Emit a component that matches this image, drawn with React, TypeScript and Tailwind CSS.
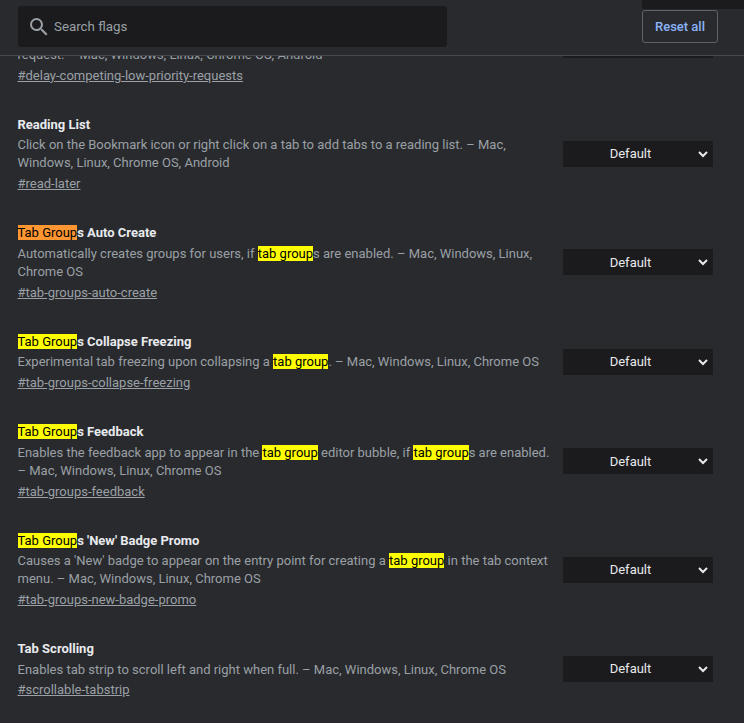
import type { ReactNode } from "react";

// Chrome's find-in-page highlight on top of the flags list
function Hit({ children, active }: { children: ReactNode; active?: boolean }) {
  return (
    <mark className={`font-normal text-black ${active ? "bg-[#ff9632]" : "bg-[#ffff00]"}`}>
      {children}
    </mark>
  );
}

function FlagSelect() {
  return (
    <div className="mb-[1px] flex h-[26px] w-[150px] shrink-0 items-center bg-[#1b1b1d] pr-[3px] text-[13px] text-[#e8eaed]">
      <span className="flex-1 pl-[2px] text-center">Default</span>
      <svg width="14" height="14" viewBox="0 0 14 14" fill="none" stroke="#e8eaed" strokeWidth="2">
        <path d="M3 5l4 4 4-4" />
      </svg>
    </div>
  );
}

function Flag({
  title,
  desc,
  link,
}: {
  title: ReactNode;
  desc: ReactNode;
  link: string;
}) {
  return (
    <div className="flex items-center justify-between pb-[31px]">
      <div className="w-[535px]">
        <div className="text-[13px] leading-[18px] font-bold text-[#e8eaed]">{title}</div>
        <p className="mt-[2.5px] text-[13px] leading-[18.2px] text-[#9aa0a6]">{desc}</p>
        <a className="mt-[2.6px] block text-[13px] leading-[18px] text-[#9aa0a6] underline">{link}</a>
      </div>
      <FlagSelect />
    </div>
  );
}

export default function App() {
  return (
    <div className="relative flex h-[723px] w-[744px] flex-col overflow-hidden bg-[#292a2d] font-['Roboto',sans-serif]">
      <header className="z-10 flex h-[56px] shrink-0 items-start justify-between border-b border-[#48494c] bg-[#292a2d] pr-[26px] pl-[18px]">
        <div className="mt-[6px] flex h-[41px] w-[429px] items-center gap-[3px] rounded-[3px] bg-[#1b1b1d] pl-[9px] text-[13.33px] text-[#9aa0a6]">
          <svg width="24" height="24" viewBox="0 0 24 24" fill="#9aa0a6">
            <path d="M15.5 14h-.79l-.28-.27A6.471 6.471 0 0 0 16 9.5 6.5 6.5 0 1 0 9.5 16c1.61 0 3.09-.59 4.23-1.57l.27.28v.79l5 4.99L20.49 19l-4.99-5zm-6 0C7.01 14 5 11.99 5 9.5S7.01 5 9.5 5 14 7.01 14 9.5 11.99 14 9.5 14z" />
          </svg>
          <span>Search flags</span>
        </div>
        <button className="mt-[10px] h-[33px] w-[76px] rounded-[3px] border border-[#5f6368] text-[13px] font-medium text-[#8ab4f8]">
          Reset all
        </button>
      </header>
      <div className="absolute top-0 right-0 z-20 h-[9px] w-[102px] rounded-bl-[3px] bg-[#1b1b1d]" />

      <main className="mt-[-48.8px] pr-[31px] pl-[17.5px]">
        <Flag
          title="Delay competing low priority requests"
          desc={
            <>
              Delays the processing of competing low priority requests until the current
              <br />
              request. – Mac, Windows, Linux, Chrome OS, Android
            </>
          }
          link="#delay-competing-low-priority-requests"
        />
        <Flag
          title="Reading List"
          desc="Click on the Bookmark icon or right click on a tab to add tabs to a reading list. – Mac, Windows, Linux, Chrome OS, Android"
          link="#read-later"
        />
        <Flag
          title={
            <>
              <Hit active>Tab Group</Hit>s Auto Create
            </>
          }
          desc={
            <>
              Automatically creates groups for users, if <Hit>tab group</Hit>s are enabled. – Mac, Windows, Linux, Chrome OS
            </>
          }
          link="#tab-groups-auto-create"
        />
        <Flag
          title={
            <>
              <Hit>Tab Group</Hit>s Collapse Freezing
            </>
          }
          desc={
            <>
              Experimental tab freezing upon collapsing a <Hit>tab group</Hit>. – Mac, Windows, Linux, Chrome OS
            </>
          }
          link="#tab-groups-collapse-freezing"
        />
        <Flag
          title={
            <>
              <Hit>Tab Group</Hit>s Feedback
            </>
          }
          desc={
            <>
              Enables the feedback app to appear in the <Hit>tab group</Hit> editor bubble, if <Hit>tab group</Hit>s are enabled. – Mac, Windows, Linux, Chrome OS
            </>
          }
          link="#tab-groups-feedback"
        />
        <Flag
          title={
            <>
              <Hit>Tab Group</Hit>s 'New' Badge Promo
            </>
          }
          desc={
            <>
              Causes a 'New' badge to appear on the entry point for creating a <Hit>tab group</Hit> in the tab context menu. – Mac, Windows, Linux, Chrome OS
            </>
          }
          link="#tab-groups-new-badge-promo"
        />
        <Flag
          title="Tab Scrolling"
          desc="Enables tab strip to scroll left and right when full. – Mac, Windows, Linux, Chrome OS"
          link="#scrollable-tabstrip"
        />
      </main>
    </div>
  );
}
